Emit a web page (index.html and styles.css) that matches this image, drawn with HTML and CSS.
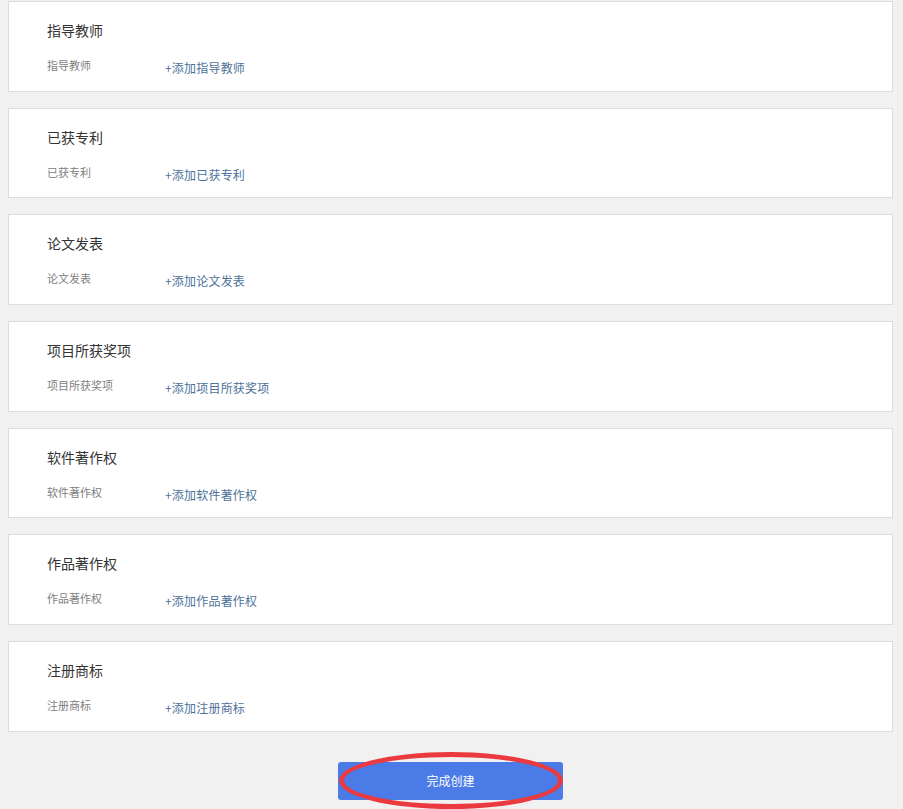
FILE: index.html
```html
<!DOCTYPE html>
<html lang="zh">
<head>
<meta charset="utf-8">
<link rel="stylesheet" href="styles.css">
</head>
<body>
<div class="page">
  <section class="card">
    <h3 class="card-title">指导教师</h3>
    <div class="row"><span class="label">指导教师</span><a class="add">+添加指导教师</a></div>
  </section>
  <section class="card">
    <h3 class="card-title">已获专利</h3>
    <div class="row"><span class="label">已获专利</span><a class="add">+添加已获专利</a></div>
  </section>
  <section class="card">
    <h3 class="card-title">论文发表</h3>
    <div class="row"><span class="label">论文发表</span><a class="add">+添加论文发表</a></div>
  </section>
  <section class="card">
    <h3 class="card-title">项目所获奖项</h3>
    <div class="row"><span class="label">项目所获奖项</span><a class="add">+添加项目所获奖项</a></div>
  </section>
  <section class="card">
    <h3 class="card-title">软件著作权</h3>
    <div class="row"><span class="label">软件著作权</span><a class="add">+添加软件著作权</a></div>
  </section>
  <section class="card">
    <h3 class="card-title">作品著作权</h3>
    <div class="row"><span class="label">作品著作权</span><a class="add">+添加作品著作权</a></div>
  </section>
  <section class="card">
    <h3 class="card-title">注册商标</h3>
    <div class="row"><span class="label">注册商标</span><a class="add">+添加注册商标</a></div>
  </section>
  <div class="actions">
    <div class="btn-wrap">
      <button class="submit">完成创建</button>
      <div class="ring"></div>
    </div>
  </div>
</div>
</body>
</html>
```
FILE: styles.css
```css
html, body {
  margin: 0;
  padding: 0;
  background: #f1f1f1;
  font-family: "Noto Sans CJK SC", "Liberation Sans", sans-serif;
}
.page {
  padding: 1px 10px 0 8px;
  display: flex;
  flex-direction: column;
  gap: 16px;
  height: 809px;
  box-sizing: border-box;
  overflow: hidden;
}
.card {
  background: #fff;
  border: 1px solid #dcdcdc;
  height: 90.67px;
  box-sizing: border-box;
  padding: 19px 0 0 38px;
  flex-shrink: 0;
}
.card-title {
  margin: 0;
  font-size: 14px;
  line-height: 18px;
  font-weight: normal;
  color: #333;
}
.row {
  display: flex;
  align-items: flex-start;
  margin-top: 18px;
}
.label {
  width: 118px;
  font-size: 11px;
  line-height: 16px;
  color: #808080;
}
.add {
  font-size: 12px;
  line-height: 16px;
  padding-top: 3px;
  color: #4d7199;
  cursor: pointer;
  letter-spacing: 0.2px;
}
.actions {
  display: flex;
  justify-content: center;
  padding-top: 14px;
}
.btn-wrap {
  position: relative;
  width: 225px;
  height: 38px;
}
.submit {
  width: 225px;
  height: 38px;
  border: none;
  border-radius: 3px;
  background: #4a7be6;
  color: #fff;
  font-family: "Noto Sans CJK SC", "Liberation Sans", sans-serif;
  font-size: 12px;
}
.ring {
  position: absolute;
  left: 1px;
  top: -10px;
  width: 224px;
  height: 57px;
  box-sizing: border-box;
  border: 5px solid #ea3a40;
  border-radius: 50%;
  pointer-events: none;
}
```
